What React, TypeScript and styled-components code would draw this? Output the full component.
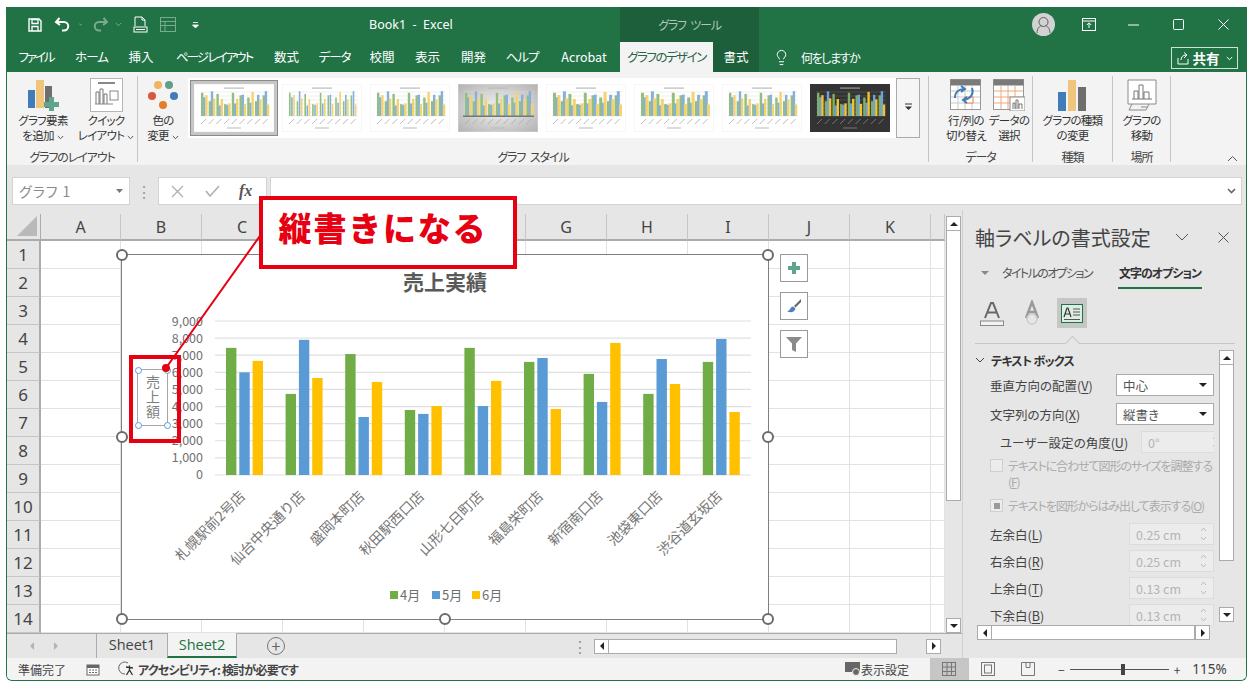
import React from "react";
import styled, { createGlobalStyle } from "styled-components";
import { Lightbulb } from "lucide-react";

const GREEN = "#217346";
const RED = "#e60012";
const FONT = '"Noto Sans CJK JP", "Noto Sans", sans-serif';

const GlobalStyle = createGlobalStyle`
  html, body { margin: 0; padding: 0; background: #fff; }
  body { font-family: ${FONT}; font-feature-settings: "palt"; color: #444; overflow: hidden; }
  * { box-sizing: border-box; }
`;

const Window = styled.div`
  position: relative;
  width: 1241px;
  height: 674px;
  margin: 7px 0 0 6px;
  border: solid ${GREEN};
  border-width: 0 1px 1px 1px;
  border-radius: 0 0 6px 6px;
  overflow: hidden;
  display: flex;
  flex-direction: column;
  background: #e6e6e6;
`;

/* title bar */
const TitleBar = styled.div`
  height: 35px;
  background: ${GREEN};
  color: #fff;
  display: flex;
  flex: none;
`;
const Qat = styled.div`
  width: 362px;
  padding-left: 13px;
  display: flex;
  align-items: center;
`;
const QatSlot = styled.div<{ $w: number; $ml?: number; $dim?: boolean }>`
  width: ${(p) => p.$w}px;
  margin-left: ${(p) => p.$ml || 0}px;
  opacity: ${(p) => (p.$dim ? 0.4 : 1)};
  display: flex;
  justify-content: center;
  align-items: center;
`;
const BookTitle = styled.div`
  width: 251px;
  font-size: 12.5px;
  line-height: 35px;
  font-family: "Noto Sans", sans-serif;
  white-space: pre;
`;
const ContextTab = styled.div`
  width: 139px;
  height: 35px;
  background: #1c5f3a;
  color: #a9c9b6;
  font-size: 12px;
  letter-spacing: -1.2px;
  word-spacing: 3px;
  line-height: 35px;
  text-align: center;
`;
const WindowButtons = styled.div`
  margin-left: auto;
  display: flex;
`;
const WindowButton = styled.div`
  width: 45px;
  height: 35px;
  display: flex;
  align-items: center;
  justify-content: center;
`;
const Avatar = styled.div`
  width: 23px;
  height: 23px;
  border-radius: 50%;
  background: #d2d2d2;
  display: flex;
  align-items: center;
  justify-content: center;
`;

/* ribbon tabs */
const TabRow = styled.div`
  height: 30px;
  background: ${GREEN};
  display: flex;
  align-items: stretch;
  flex: none;
`;
const Tab = styled.div<{ $w: number; $ls?: number; $active?: boolean; $dark?: boolean }>`
  width: ${(p) => p.$w}px;
  text-align: center;
  font-size: 12.5px;
  letter-spacing: ${(p) => p.$ls || 0}px;
  line-height: 30px;
  white-space: nowrap;
  background: ${(p) => (p.$active ? "#f3f3f3" : p.$dark ? "#1c5f3a" : "transparent")};
  color: ${(p) => (p.$active ? "#2b6346" : "#fff")};
`;
const TellMe = styled.div`
  margin-left: 14px;
  display: flex;
  align-items: center;
  gap: 11px;
  color: #fff;
  font-size: 12px;
  letter-spacing: -1.4px;
`;
const ShareButton = styled.div`
  margin: 5px 8px 3px auto;
  width: 67px;
  border: 1px solid #cfe0d6;
  color: #fff;
  font-size: 13.5px;
  font-weight: 700;
  display: flex;
  align-items: center;
  justify-content: center;
  gap: 3px;
`;

/* ribbon */
const Ribbon = styled.div`
  height: 93px;
  flex: none;
  background: #f3f3f3;
  display: flex;
  padding-top: 4px;
`;
const Group = styled.div<{ $w: number }>`
  width: ${(p) => p.$w}px;
  height: 86px;
  border-right: 1px solid #c6c6c6;
  display: flex;
  flex-direction: column;
  flex: none;
`;
const GroupBody = styled.div<{ $pl?: number }>`
  flex: 1;
  min-height: 0;
  display: flex;
  padding-left: ${(p) => p.$pl || 0}px;
`;
const GroupLabel = styled.div`
  height: 16px;
  margin-bottom: -4px;
  font-size: 12px;
  letter-spacing: -1.1px;
  word-spacing: 3px;
  line-height: 14px;
  text-align: center;
  color: #444;
`;
const BigButton = styled.div<{ $w: number }>`
  width: ${(p) => p.$w}px;
  flex: none;
  display: flex;
  flex-direction: column;
  align-items: center;
  font-size: 11.5px;
  letter-spacing: -0.7px;
  line-height: 15px;
  color: #333;
  white-space: nowrap;
  text-align: center;
`;
const BigIcon = styled.div`
  height: 37px;
  display: flex;
  align-items: center;
  justify-content: center;
  flex: none;
`;
const Gallery = styled.div`
  margin-top: 2px;
  width: 708px;
  height: 60px;
  background: #fff;
  padding-left: 2px;
  display: flex;
  align-items: center;
  gap: 8px;
  flex: none;
`;
const Thumb = styled.div<{ $selected?: boolean }>`
  width: ${(p) => (p.$selected ? 88 : 80)}px;
  height: ${(p) => (p.$selected ? 56 : 48)}px;
  margin-right: ${(p) => (p.$selected ? -4 : 0)}px;
  padding: ${(p) => (p.$selected ? "3px" : 0)};
  background: #c6c6c6;
  border: ${(p) => (p.$selected ? "1px solid #8a8a8a" : "0")};
  flex: none;
  svg { display: block; }
`;
const GalleryMore = styled.div`
  margin-top: 2px;
  width: 24px;
  height: 60px;
  border: 1px solid #ababab;
  background: #f5f5f5;
  display: flex;
  justify-content: center;
  padding-top: 24px;
  flex: none;
`;
const Collapse = styled.div`
  align-self: flex-end;
  margin: 0 8px 3px auto;
  display: flex;
`;

/* formula bar */
const FormulaBar = styled.div`
  height: 45px;
  flex: none;
  background: #e6e6e6;
  display: flex;
  padding: 12px 4px 0 5px;
  align-items: flex-start;
`;
const NameBox = styled.div`
  width: 118px;
  height: 28px;
  background: #fff;
  border: 1px solid #d4d4d4;
  font-size: 14px;
  line-height: 26px;
  letter-spacing: 1px;
  color: #8a8a8a;
  padding: 0 6px;
  display: flex;
  justify-content: space-between;
  align-items: center;
`;
const Grip = styled.div`
  width: 28px;
  height: 28px;
  color: #999;
  display: flex;
  align-items: center;
  justify-content: center;
`;
const FxBox = styled.div`
  width: 109px;
  height: 28px;
  background: #fff;
  border: 1px solid #d4d4d4;
  display: flex;
  align-items: center;
  gap: 21px;
  padding-left: 12px;
  color: #aaa;
`;
const FxText = styled.span`
  font-family: "Liberation Serif", serif;
  font-style: italic;
  font-size: 16px;
  color: #555;
  font-weight: 700;
  margin-left: -2px;
`;
const FormulaInput = styled.div`
  flex: 1;
  height: 28px;
  margin-left: 3px;
  background: #fff;
  border: 1px solid #d4d4d4;
  display: flex;
  align-items: center;
  justify-content: flex-end;
  padding-right: 5px;
`;

/* body */
const Body = styled.div`
  flex: 1;
  min-height: 0;
  display: flex;
`;
const SheetColumn = styled.div`
  width: 955px;
  flex: none;
  display: flex;
  flex-direction: column;
  padding-top: 4px;
`;
const SheetArea = styled.div`
  height: 419px;
  flex: none;
  display: flex;
`;
const GridWrap = styled.div`
  position: relative;
  width: 938px;
  flex: none;
  overflow: hidden;
  background: #fff;
`;
const SheetGrid = styled.div`
  display: grid;
  grid-template-columns: 34px 80px repeat(10, 81px) 14px;
  grid-template-rows: 27px repeat(14, 28px);
`;
const Corner = styled.div`
  background: #e6e6e6;
  border-bottom: 2px solid #ababab;
  border-right: 1px solid #ababab;
  position: relative;
  &::after {
    content: "";
    position: absolute;
    right: 3px;
    bottom: 3px;
    width: 20px;
    height: 20px;
    background: #b9b9b9;
    clip-path: polygon(100% 0, 100% 100%, 0 100%);
  }
`;
const ColHead = styled.div`
  background: #e6e6e6;
  border-bottom: 2px solid #ababab;
  border-right: 1px solid #c6c6c6;
  font-family: "Noto Sans", sans-serif;
  font-size: 16px;
  line-height: 26px;
  text-align: center;
  color: #444;
`;
const RowHead = styled.div`
  background: #e6e6e6;
  border-bottom: 1px solid #c6c6c6;
  border-right: 2px solid #ababab;
  font-family: "Noto Sans", sans-serif;
  font-size: 17px;
  line-height: 27px;
  text-align: center;
  color: #444;
`;
const Cell = styled.div`
  border-right: 1px solid #e2e2e2;
  border-bottom: 1px solid #e2e2e2;
`;

/* chart */
const Chart = styled.div`
  position: absolute;
  left: 115px;
  top: 41px;
  width: 646px;
  height: 364px;
  background: #fff;
  outline: 1.5px solid #7f7f7f;
`;
const ChartSvg = styled.svg`
  display: block;
  text {
    font-family: ${FONT};
    font-feature-settings: normal;
  }
`;
const Handle = styled.div<{ $x: number; $y: number }>`
  position: absolute;
  left: ${(p) => p.$x}%;
  top: ${(p) => p.$y}%;
  width: 12px;
  height: 12px;
  margin: -6px 0 0 -6px;
  border-radius: 50%;
  background: #fff;
  border: 2px solid #6b6b6b;
`;
const AxisTitle = styled.div`
  position: absolute;
  left: 15px;
  top: 114px;
  width: 31px;
  height: 57px;
  border: 1px solid #a6a6a6;
  writing-mode: vertical-rl;
  font-size: 14px;
  line-height: 29px;
  text-align: center;
  letter-spacing: 1px;
  color: #7f7f7f;
  font-feature-settings: normal;
`;
const BlueDot = styled.div<{ $x: number; $y: number }>`
  position: absolute;
  left: ${(p) => p.$x}%;
  top: ${(p) => p.$y}%;
  width: 7px;
  height: 7px;
  margin: -3.5px 0 0 -3.5px;
  border-radius: 50%;
  background: #fff;
  border: 1.5px solid #5b9bd5;
`;
const ChartTools = styled.div`
  position: absolute;
  left: 773px;
  top: 40px;
  display: flex;
  flex-direction: column;
  gap: 10px;
`;
const ChartTool = styled.div`
  width: 28px;
  height: 28px;
  background: #fff;
  border: 1px solid #9a9a9a;
  display: flex;
  align-items: center;
  justify-content: center;
`;

/* scroll bars */
const VScroll = styled.div`
  width: 15px;
  flex: none;
  margin-left: 1px;
  display: flex;
  flex-direction: column;
  background: #e6e6e6;
  padding-top: 2px;
`;
const ScrollBtn = styled.div`
  width: 15px;
  height: 15px;
  flex: none;
  background: #fff;
  border: 1px solid #ababab;
  display: flex;
  align-items: center;
  justify-content: center;
`;
const Tri = styled.span<{ $dir: "up" | "down" | "left" | "right"; $color?: string }>`
  width: 0;
  height: 0;
  border-style: solid;
  border-color: transparent;
  ${(p) => {
    const c = p.$color || "#222";
    if (p.$dir === "up") return `border-width: 0 4px 4px; border-bottom-color: ${c};`;
    if (p.$dir === "down") return `border-width: 4px 4px 0; border-top-color: ${c};`;
    if (p.$dir === "left") return `border-width: 4px 4px 4px 0; border-right-color: ${c};`;
    return `border-width: 4px 0 4px 4px; border-left-color: ${c};`;
  }}
`;
const VThumb = styled.div<{ $h: number }>`
  height: ${(p) => p.$h}px;
  flex: none;
  background: #fff;
  border: 1px solid #ababab;
  border-top: 0;
`;
const Fill = styled.div`
  flex: 1;
`;

/* sheet tabs */
const SheetBar = styled.div`
  height: 25px;
  flex: none;
  background: #e6e6e6;
  border-top: 1px solid #ababab;
  display: flex;
  align-items: center;
`;
const SheetNav = styled.div`
  width: 89px;
  height: 100%;
  padding-left: 23px;
  display: flex;
  align-items: center;
  gap: 20px;
  opacity: 0.25;
`;
const SheetTab = styled.div<{ $active?: boolean }>`
  height: 25px;
  margin-top: -1px;
  width: ${(p) => (p.$active ? 70 : 71)}px;
  border-left: 1px solid #ababab;
  ${(p) => p.$active && `border-right: 1px solid #ababab; background: #f3f3f3; border-bottom: 2px solid ${GREEN}; color: ${GREEN};`}
  font-family: "Open Sans", sans-serif;
  font-size: 14.5px;
  line-height: 23px;
  text-align: center;
`;
const AddSheet = styled.div`
  margin-left: 30px;
  width: 18px;
  height: 18px;
  border-radius: 50%;
  border: 1px solid #777;
  color: #666;
  font-size: 16px;
  line-height: 15px;
  text-align: center;
`;
const SplitGrip = styled.div`
  margin-left: 288px;
  width: 14px;
  color: #999;
  display: flex;
  justify-content: center;
`;
const HScroll = styled.div`
  margin-left: 7px;
  display: flex;
  align-items: center;
`;
const HThumb = styled.div<{ $w: number }>`
  width: ${(p) => p.$w}px;
  height: 15px;
  background: #fff;
  border: 1px solid #ababab;
  border-left: 0;
`;
const HGap = styled.div<{ $w: number }>`
  width: ${(p) => p.$w}px;
`;

/* task pane */
const Pane = styled.div`
  flex: 1;
  min-width: 0;
  position: relative;
  border-left: 1px solid #d0d0d0;
  background: #e6e6e6;
  padding-left: 12px;
  display: flex;
  flex-direction: column;
`;
const PaneHead = styled.div`
  margin-top: 13px;
  height: 28px;
  display: flex;
  align-items: center;
  font-size: 20px;
  color: #444;
  white-space: nowrap;
`;
const PaneHeadBtns = styled.div`
  margin-left: 24px;
  display: flex;
  gap: 29px;
  align-items: center;
`;
const PaneTabs = styled.div`
  margin-top: 10px;
  height: 28px;
  display: flex;
  align-items: flex-start;
  font-size: 12px;
  line-height: 24px;
`;
const PaneTabMuted = styled.div`
  margin-left: 6px;
  display: flex;
  align-items: center;
  gap: 13px;
  width: 137px;
  color: #555;
  letter-spacing: -1.6px;
  white-space: nowrap;
`;
const PaneTabActive = styled.div`
  width: 84px;
  height: 28px;
  border-bottom: 2px solid ${GREEN};
  font-weight: 700;
  letter-spacing: -1px;
  color: #333;
  text-align: center;
  white-space: nowrap;
`;
const PaneIcons = styled.div`
  margin-top: 9px;
  height: 30px;
  display: flex;
  align-items: center;
  padding-left: 2px;
  gap: 10px;
`;
const PaneIcon = styled.div<{ $on?: boolean }>`
  width: 30px;
  height: 30px;
  background: ${(p) => (p.$on ? "#c6c6c6" : "transparent")};
  display: flex;
  align-items: center;
  justify-content: center;
`;
const PaneDivider = styled.div`
  position: relative;
  margin-top: 15px;
  width: 260px;
  border-top: 1px solid #c6c6c6;
  flex: none;
  &::after {
    content: "";
    position: absolute;
    left: 92px;
    top: -6px;
    width: 10px;
    height: 10px;
    transform: rotate(45deg);
    background: #e6e6e6;
    border: solid #c6c6c6;
    border-width: 1px 0 0 1px;
  }
`;
const PaneBody = styled.div`
  display: flex;
  height: 276px;
  margin-top: 5px;
  flex: none;
`;
const PaneForm = styled.div`
  width: 239px;
  flex: none;
  overflow: hidden;
  padding-top: 2px;
`;
const SectionHead = styled.div`
  display: flex;
  align-items: center;
  gap: 6px;
  height: 18px;
  font-size: 12px;
  font-weight: 700;
  letter-spacing: -0.7px;
  color: #333;
`;
const FormRow = styled.div<{ $mt?: number; $indent?: number }>`
  display: flex;
  align-items: center;
  height: 22px;
  margin-top: ${(p) => (p.$mt === undefined ? 5 : p.$mt)}px;
  padding-left: ${(p) => p.$indent || 15}px;
  font-size: 12.5px;
  color: #444;
  white-space: nowrap;
  u { text-underline-offset: 2px; }
`;
const Field = styled.div<{ $off?: boolean }>`
  position: absolute;
  right: 0;
  ${(p) => (p.$off ? "width: 85px;" : "width: 98px;")}
  height: 22px;
  background: ${(p) => (p.$off ? "#ececec" : "#fff")};
  border: 1px solid ${(p) => (p.$off ? "#dcdcdc" : "#ababab")};
  color: ${(p) => (p.$off ? "#b4b4b4" : "#555")};
  font-size: 12.5px;
  padding: 0 6px;
  display: flex;
  align-items: center;
  justify-content: space-between;
`;
const FieldSlot = styled.div`
  position: relative;
  margin-left: auto;
  width: 98px;
  height: 22px;
  flex: none;
`;
const CheckRow = styled.div<{ $mt: number }>`
  display: flex;
  margin-top: ${(p) => p.$mt}px;
  padding-left: 15px;
  gap: 5px;
  font-size: 12px;
  letter-spacing: -1.05px;
  line-height: 16px;
  color: #ababab;
  white-space: nowrap;
`;
const CheckBox = styled.div<{ $on?: boolean }>`
  width: 13px;
  height: 13px;
  margin-top: 1px;
  flex: none;
  background: #ececec;
  border: 1px solid #cfcfcf;
  display: flex;
  align-items: center;
  justify-content: center;
  &::after {
    content: "";
    display: ${(p) => (p.$on ? "block" : "none")};
    width: 6px;
    height: 6px;
    background: #9a9a9a;
  }
`;
const PaneV = styled.div`
  width: 15px;
  margin-left: 5px;
  display: flex;
  flex-direction: column;
  margin-top: 1px;
  height: 272px;
`;
const PaneH = styled.div`
  margin-left: 2px;
  display: flex;
  align-items: center;
  height: 15px;
`;

/* status bar */
const StatusBar = styled.div`
  height: 22px;
  flex: none;
  background: #f3f3f3;
  display: flex;
  align-items: center;
  font-size: 12px;
  color: #444;
  padding-left: 11px;
`;
const StatusItem = styled.div<{ $ml?: number; $bold?: boolean }>`
  margin-left: ${(p) => p.$ml || 0}px;
  font-weight: ${(p) => (p.$bold ? 700 : 400)};
  letter-spacing: ${(p) => (p.$bold ? -0.8 : 0)}px;
  display: flex;
  align-items: center;
  white-space: nowrap;
`;
const ViewButton = styled.div<{ $on?: boolean; $ml?: number }>`
  width: ${(p) => (p.$on ? 39 : 31)}px;
  height: 22px;
  margin-left: ${(p) => p.$ml || 0}px;
  background: ${(p) => (p.$on ? "#c6c6c6" : "transparent")};
  display: flex;
  align-items: center;
  justify-content: center;
`;
const ZoomTrack = styled.div`
  position: relative;
  margin: 0 5px;
  width: 99px;
  height: 1px;
  background: #555;
`;
const ZoomThumb = styled.div`
  position: absolute;
  left: 51px;
  top: -5px;
  width: 4px;
  height: 11px;
  background: #444;
`;
const ZoomPercent = styled.div`
  margin-left: 12px;
  font-family: "Noto Sans", sans-serif;
  font-size: 13.5px;
`;

/* overlays */
const Callout = styled.div`
  position: absolute;
  left: 252px;
  top: 189px;
  width: 258px;
  height: 73px;
  padding-right: 10px;
  background: #fff;
  border: 4px solid ${RED};
  color: ${RED};
  font-size: 33px;
  font-weight: 800;
  letter-spacing: 1.8px;
  text-align: center;
  line-height: 55px;
  font-feature-settings: normal;
`;
const RedBox = styled.div`
  position: absolute;
  left: 122px;
  top: 348px;
  width: 52px;
  height: 88px;
  border: 4px solid ${RED};
`;
const Leader = styled.svg`
  position: absolute;
  left: 0;
  top: 0;
  pointer-events: none;
`;

const COLS = ["A", "B", "C", "D", "E", "F", "G", "H", "I", "J", "K", ""];
const ROWS = Array.from({ length: 14 }, (_, i) => i + 1);

const GREEN_BAR = "#70ad47";
const BLUE_BAR = "#5b9bd5";
const YELLOW_BAR = "#ffc000";

const DATA = [
  [7430, 6000, 6670],
  [4740, 7900, 5670],
  [7070, 3390, 5440],
  [3800, 3570, 4030],
  [7430, 4030, 5500],
  [6610, 6840, 3860],
  [5910, 4270, 7720],
  [4740, 6780, 5320],
  [6610, 7950, 3680],
];
const STORES = [
  "札幌駅前2号店",
  "仙台中央通り店",
  "盛岡本町店",
  "秋田駅西口店",
  "山形七日町店",
  "福島栄町店",
  "新宿南口店",
  "池袋東口店",
  "渋谷道玄坂店",
];
const TABS: [string, number, number][] = [
  ["ファイル", 58, -2],
  ["ホーム", 53, -1],
  ["挿入", 46, 0],
  ["ページ レイアウト", 100, -2],
  ["数式", 45, 0],
  ["データ", 51, -1],
  ["校閲", 44, 0],
  ["表示", 47, 0],
  ["開発", 45, 0],
  ["ヘルプ", 52, -1],
  ["Acrobat", 72, 0],
];
const MARGINS: [string, string, string, number][] = [
  ["左余白", "L", "0.25 cm", 9],
  ["右余白", "R", "0.25 cm", 5],
  ["上余白", "T", "0.13 cm", 5],
  ["下余白", "B", "0.13 cm", 5],
];
const AXIS = ["9,000", "8,000", "7,000", "6,000", "5,000", "4,000", "3,000", "2,000", "1,000", "0"];

const Caret = ({ color = "#555" }: { color?: string }) => (
  <svg width="7" height="5" viewBox="0 0 7 5" style={{ marginLeft: 3 }}>
    <path d="M.8 1l2.7 2.7L6.2 1" fill="none" stroke={color} strokeWidth="1" />
  </svg>
);

const Spin = () => (
  <svg width="7" height="16" viewBox="0 0 7 16">
    <path d="M1 5l2.5-3L6 5M1 11l2.5 3L6 11" fill="none" stroke="#bdbdbd" strokeWidth="1" />
  </svg>
);

const MiniChart = ({ variant }: { variant: number }) => {
  const dark = variant === 7;
  const grey = variant === 3;
  const thin = variant === 1;
  const wide = variant === 4 || variant === 5;
  const w = thin ? 1.6 : wide ? 3 : 2.4;
  const bg = dark ? "#333" : grey ? "url(#greyFill)" : "#fff";
  const line = dark ? "#666" : "#dedede";
  const colors = dark ? ["#7fb05f", "#6fa3d8", "#f2c230"] : ["#93bf7c", "#86b0dc", "#f5d36a"];
  return (
    <svg width="100%" height="100%" viewBox="0 0 80 48" preserveAspectRatio="none">
      <defs>
        <radialGradient id="greyFill" r="0.8">
          <stop offset="0" stopColor="#f4f4f4" />
          <stop offset="1" stopColor="#a8a8a8" />
        </radialGradient>
      </defs>
      <rect width="80" height="48" fill={bg} stroke={dark ? "none" : "#e6e6e6"} strokeWidth=".6" />
      <rect x="30" y="3.5" width="20" height="1.2" fill={dark ? "#999" : "#bbb"} />
      {[8, 12, 16, 20, 24, 28, 32].map((y) => (
        <line key={y} x1="6" x2="76" y1={y} y2={y} stroke={line} strokeWidth=".5" />
      ))}
      {variant === 6 &&
        [14, 26, 38, 50, 62].map((x) => (
          <line key={x} x1={x} x2={x} y1="8" y2="32" stroke={line} strokeWidth=".5" />
        ))}
      {DATA.map((g, i) =>
        g.map((v, j) => (
          <rect
            key={j}
            x={7 + i * 7.7 + j * (wide ? 2.2 : 2.1)}
            y={32 - v / 320}
            width={w}
            height={v / 320}
            fill={colors[j]}
          />
        ))
      )}
      {grey && <rect x="5" y="31.5" width="71" height="1.5" fill="#777" />}
      {DATA.map((_, i) => (
        <line
          key={i}
          x1={7 + i * 7.7}
          y1="40"
          x2={12 + i * 7.7}
          y2="35"
          stroke={dark ? "#888" : "#aaa"}
          strokeWidth=".8"
        />
      ))}
      <rect x="33" y="43.5" width="14" height="1" fill={dark ? "#777" : "#bbb"} />
    </svg>
  );
};

const Bars3 = () => (
  <svg width="34" height="34" viewBox="0 0 34 34">
    <rect x="2" y="14" width="8" height="19" fill="#3f7cb8" />
    <rect x="12" y="2" width="8" height="31" fill="#efc47c" />
    <rect x="22" y="9" width="8" height="24" fill="#6e6e6e" />
  </svg>
);

const TableIcon = ({ arrows }: { arrows?: boolean }) => (
  <svg width="32" height="32" viewBox="0 0 32 32">
    <rect x=".5" y=".5" width="30" height="30" fill="#fff" stroke="#999" />
    <rect x=".5" y=".5" width="30" height="6" fill="#7a7a7a" />
    {[12, 18, 24].map((y) => (
      <line key={y} x1="1" x2="30" y1={y} y2={y} stroke={arrows ? "#c9c9c9" : "#f0a878"} />
    ))}
    {[8, 15, 22].map((x) => (
      <line key={x} x1={x} x2={x} y1="7" y2="30" stroke={arrows ? "#c9c9c9" : "#f0a878"} />
    ))}
    {arrows ? (
      <>
        <rect x="15" y="18" width="8" height="6" fill="#fff" stroke="#e8804a" />
        <path d="M5 19c0-6 4-9 9-9M11 7l4 3-4 3" fill="none" stroke="#3f7cb8" strokeWidth="2" />
        <path d="M22 9c2 5-1 11-8 12M17 18l-4 3 4 3" fill="none" stroke="#3f7cb8" strokeWidth="2" />
      </>
    ) : (
      <>
        <rect x="17" y="18" width="15" height="14" fill="#fff" stroke="#8a8a8a" />
        <path d="M20 30v-6h2v6M23 30v-9h2v9M26 30v-5h3v5" fill="none" stroke="#777" />
      </>
    )}
  </svg>
);

const SheetIcon = () => (
  <svg width="14" height="14" viewBox="0 0 14 14">
    <rect x=".5" y=".5" width="13" height="13" fill="none" stroke="#777" />
    <path d="M.5 5h13M.5 9.5h13M5 .5v13M9.5 .5v13" stroke="#777" />
  </svg>
);

export default function App() {
  return (
    <>
      <GlobalStyle />
      <Window>
        <TitleBar>
          <Qat>
            <QatSlot $w={30}>
              <svg width="16" height="16" viewBox="0 0 16 16">
                <path d="M2 2h10l2 2v10H2z" fill="none" stroke="#fff" strokeWidth="1.4" />
                <path d="M5 2.5h6v4H5zM5 14V9.5h6V14" fill="none" stroke="#fff" strokeWidth="1.3" />
              </svg>
            </QatSlot>
            <QatSlot $w={26}>
              <svg width="18" height="15" viewBox="0 0 18 15">
                <path d="M5.5 1L2 5l4 3" fill="none" stroke="#fff" strokeWidth="2" />
                <path d="M2.5 5H10a4 4 0 0 1 0 8.5H8" fill="none" stroke="#fff" strokeWidth="2" />
              </svg>
            </QatSlot>
            <QatSlot $w={6}>
              <Caret color="#fff" />
            </QatSlot>
            <QatSlot $w={24} $ml={6} $dim>
              <svg width="18" height="15" viewBox="0 0 18 15">
                <path d="M12.5 1L16 5l-4 3" fill="none" stroke="#fff" strokeWidth="2" />
                <path d="M15.5 5H8a4 4 0 0 0 0 8.5h2" fill="none" stroke="#fff" strokeWidth="2" />
              </svg>
            </QatSlot>
            <QatSlot $w={10} $dim>
              <Caret color="#fff" />
            </QatSlot>
            <QatSlot $w={24} $ml={6}>
              <svg width="15" height="17" viewBox="0 0 15 17">
                <path d="M2 10V1h7l3 3v6M9 1v3h3" fill="none" stroke="#fff" />
                <rect x="1" y="11" width="13" height="5" fill="none" stroke="#fff" />
                <path d="M3 13.5h9" stroke="#fff" />
              </svg>
            </QatSlot>
            <QatSlot $w={24} $ml={4} $dim>
              <svg width="16" height="15" viewBox="0 0 16 15">
                <rect x=".5" y=".5" width="15" height="14" fill="none" stroke="#fff" />
                <path d="M.5 4.5h15M.5 8.5h15M5 4.5v10" stroke="#fff" />
              </svg>
            </QatSlot>
            <QatSlot $w={20} $ml={5}>
              <svg width="7" height="8" viewBox="0 0 7 8">
                <path d="M1 1.5h5M.5 4l3 3 3-3z" stroke="#fff" fill="#fff" strokeWidth=".8" />
              </svg>
            </QatSlot>
          </Qat>
          <BookTitle>Book1  -  Excel</BookTitle>
          <ContextTab>グラフ ツール</ContextTab>
          <WindowButtons>
            <WindowButton>
              <Avatar>
                <svg width="15" height="18" viewBox="0 0 15 18">
                  <circle cx="7.5" cy="6" r="4.5" fill="none" stroke="#5f5f5f" />
                  <path d="M1 17c0-5 3-7 4.5-7.5M14 17c0-5-3-7-4.5-7.5" fill="none" stroke="#5f5f5f" />
                </svg>
              </Avatar>
            </WindowButton>
            <WindowButton>
              <svg width="14" height="13" viewBox="0 0 14 13">
                <rect x=".5" y=".5" width="13" height="12" fill="none" stroke="#fff" />
                <path d="M.5 3h13M7 10V5M4.8 7L7 4.8 9.2 7" fill="none" stroke="#fff" />
              </svg>
            </WindowButton>
            <WindowButton>
              <svg width="11" height="2" viewBox="0 0 11 2">
                <path d="M0 1h11" stroke="#fff" />
              </svg>
            </WindowButton>
            <WindowButton>
              <svg width="11" height="11" viewBox="0 0 11 11">
                <rect x=".5" y=".5" width="10" height="10" rx="1" fill="none" stroke="#fff" />
              </svg>
            </WindowButton>
            <WindowButton>
              <svg width="11" height="11" viewBox="0 0 11 11">
                <path d="M.5.5l10 10M10.5.5l-10 10" stroke="#fff" />
              </svg>
            </WindowButton>
          </WindowButtons>
        </TitleBar>

        <TabRow>
          {TABS.map(([label, w, ls]) => (
            <Tab key={label} $w={w} $ls={ls}>
              {label}
            </Tab>
          ))}
          <Tab $w={93} $ls={-1.5} $active>
            グラフのデザイン
          </Tab>
          <Tab $w={46} $dark>
            書式
          </Tab>
          <TellMe>
            <Lightbulb size={17} strokeWidth={1.4} />
            何をしますか
          </TellMe>
          <ShareButton>
            <svg width="13" height="13" viewBox="0 0 13 13">
              <path d="M1 6v6h10V7M4 8c0-3 2-5 5-5M7 .5L10 3 7 6" fill="none" stroke="#fff" />
            </svg>
            共有
            <Caret color="#fff" />
          </ShareButton>
        </TabRow>

        <Ribbon>
          <Group $w={131}>
            <GroupBody $pl={4}>
              <BigButton $w={64}>
                <BigIcon>
                  <svg width="32" height="32" viewBox="0 0 32 32">
                    <rect x="1" y="11" width="7" height="18" fill="#3f7cb8" />
                    <rect x="9" y="1" width="8" height="28" fill="#efc47c" />
                    <rect x="18" y="7" width="7" height="22" fill="#6e6e6e" />
                    <path d="M22 18h5v5h5v5h-5v4h-5v-4h-5v-5h5z" fill="#5ea58c" />
                  </svg>
                </BigIcon>
                <span>グラフ要素</span>
                <span>
                  を追加
                  <Caret />
                </span>
              </BigButton>
              <BigButton $w={62}>
                <BigIcon>
                  <svg width="33" height="34" viewBox="0 0 33 34">
                    <rect x=".5" y=".5" width="32" height="33" fill="#fff" stroke="#b5b5b5" />
                    <rect x="8" y="4" width="17" height="2" fill="#888" />
                    <path d="M6 26V14h3v12M10 26V11h3v15M14 26V16h3v10" fill="none" stroke="#777" />
                    <rect x="20" y="13" width="8" height="9" fill="none" stroke="#888" />
                    <path d="M5 26h18" stroke="#888" />
                  </svg>
                </BigIcon>
                <span>クイック</span>
                <span>
                  レイアウト
                  <Caret />
                </span>
              </BigButton>
            </GroupBody>
            <GroupLabel>グラフのレイアウト</GroupLabel>
          </Group>
          <Group $w={791}>
            <GroupBody>
              <BigButton $w={50}>
                <BigIcon>
                  <svg width="32" height="30" viewBox="0 0 32 30">
                    <circle cx="11" cy="5" r="4" fill="#efb45e" />
                    <circle cx="22" cy="5" r="4" fill="#5f9f8a" />
                    <circle cx="5" cy="16" r="4" fill="#d9573a" />
                    <circle cx="27" cy="16" r="4" fill="#3f7cb8" />
                    <circle cx="16" cy="25" r="4" fill="#e67b2a" />
                  </svg>
                </BigIcon>
                <span>色の</span>
                <span>
                  変更
                  <Caret />
                </span>
              </BigButton>
              <Gallery>
                {[0, 1, 2, 3, 4, 5, 6, 7].map((v) => (
                  <Thumb key={v} $selected={v === 0}>
                    <MiniChart variant={v} />
                  </Thumb>
                ))}
              </Gallery>
              <GalleryMore>
                <svg width="9" height="8" viewBox="0 0 9 8">
                  <path d="M1 1h7" stroke="#333" />
                  <path d="M1 3.5h7L4.5 7z" fill="#333" />
                </svg>
              </GalleryMore>
            </GroupBody>
            <GroupLabel>グラフ スタイル</GroupLabel>
          </Group>
          <Group $w={104}>
            <GroupBody $pl={14}>
              <BigButton $w={46}>
                <BigIcon>
                  <TableIcon arrows />
                </BigIcon>
                <span>行/列の</span>
                <span>切り替え</span>
              </BigButton>
              <BigButton $w={40}>
                <BigIcon>
                  <TableIcon />
                </BigIcon>
                <span>データの</span>
                <span>選択</span>
              </BigButton>
            </GroupBody>
            <GroupLabel>データ</GroupLabel>
          </Group>
          <Group $w={80}>
            <GroupBody>
              <BigButton $w={79}>
                <BigIcon>
                  <Bars3 />
                </BigIcon>
                <span>グラフの種類</span>
                <span>の変更</span>
              </BigButton>
            </GroupBody>
            <GroupLabel>種類</GroupLabel>
          </Group>
          <Group $w={58}>
            <GroupBody>
              <BigButton $w={57}>
                <BigIcon>
                  <svg width="30" height="32" viewBox="0 0 30 32">
                    <path d="M1 1h28v24H1z" fill="#fff" stroke="#8a8a8a" />
                    <path d="M7 20V12h4v8M12 20V6h4v14M17 20v-7h5v7M5 20h20" fill="none" stroke="#777" />
                    <path d="M5 25l-3 6h17l3-6M14 28h6" fill="none" stroke="#8a8a8a" />
                  </svg>
                </BigIcon>
                <span>グラフの</span>
                <span>移動</span>
              </BigButton>
            </GroupBody>
            <GroupLabel>場所</GroupLabel>
          </Group>
          <Collapse>
            <svg width="11" height="7" viewBox="0 0 11 7">
              <path d="M1 6l4.5-4.5L10 6" fill="none" stroke="#555" />
            </svg>
          </Collapse>
        </Ribbon>

        <FormulaBar>
          <NameBox>
            グラフ 1
            <svg width="7" height="4" viewBox="0 0 7 4">
              <path d="M0 0h7L3.5 4z" fill="#777" />
            </svg>
          </NameBox>
          <Grip>⋮</Grip>
          <FxBox>
            <svg width="13" height="13" viewBox="0 0 13 13">
              <path d="M1 1l11 11M12 1L1 12" stroke="#b0b0b0" strokeWidth="1.3" />
            </svg>
            <svg width="15" height="12" viewBox="0 0 15 12">
              <path d="M1 6l4 5L14 1" fill="none" stroke="#b0b0b0" strokeWidth="1.6" />
            </svg>
            <FxText>fx</FxText>
          </FxBox>
          <FormulaInput>
            <svg width="9" height="6" viewBox="0 0 9 6">
              <path d="M1 1l3.5 3.5L8 1" fill="none" stroke="#666" strokeWidth="1.6" />
            </svg>
          </FormulaInput>
        </FormulaBar>

        <Body>
          <SheetColumn>
            <SheetArea>
              <GridWrap>
                <SheetGrid>
                  <Corner />
                  {COLS.map((c, i) => (
                    <ColHead key={i}>{c}</ColHead>
                  ))}
                  {ROWS.map((r) => (
                    <React.Fragment key={r}>
                      <RowHead>{r}</RowHead>
                      {COLS.map((_, i) => (
                        <Cell key={i} />
                      ))}
                    </React.Fragment>
                  ))}
                </SheetGrid>
                <Chart>
                  <ChartSvg width="646" height="364" viewBox="122 255 646 364">
                    <text x="445" y="290" textAnchor="middle" fontSize="21" fontWeight="700" fill="#595959">
                      売上実績
                    </text>
                    {AXIS.map((t, i) => {
                      const y = 321 + i * 17.11;
                      return (
                        <g key={t}>
                          <line x1="215" x2="751" y1={y} y2={y} stroke="#e0e0e0" strokeWidth="1.2" />
                          <text x="203" y={y + 4.5} textAnchor="end" fontSize="12.5" fill="#6f6f6f">
                            {t}
                          </text>
                        </g>
                      );
                    })}
                    {DATA.map((g, i) =>
                      g.map((v, j) => {
                        const h = (v / 1000) * 17.11;
                        return (
                          <rect
                            key={j}
                            x={226 + i * 59.6 + j * 13.3}
                            y={475 - h}
                            width="10.4"
                            height={h}
                            fill={[GREEN_BAR, BLUE_BAR, YELLOW_BAR][j]}
                          />
                        );
                      })
                    )}
                    {STORES.map((s, i) => {
                      const x = 246 + i * 59.6;
                      return (
                        <text
                          key={s}
                          transform={`translate(${x} 497) rotate(-45)`}
                          textAnchor="end"
                          fontSize="14"
                          fill="#767676"
                        >
                          {s}
                        </text>
                      );
                    })}
                    <rect x="390" y="591" width="8" height="8" fill={GREEN_BAR} />
                    <text x="400" y="600" fontSize="13" fill="#6f6f6f">4月</text>
                    <rect x="432" y="591" width="8" height="8" fill={BLUE_BAR} />
                    <text x="442" y="600" fontSize="13" fill="#6f6f6f">5月</text>
                    <rect x="472" y="591" width="8" height="8" fill={YELLOW_BAR} />
                    <text x="482" y="600" fontSize="13" fill="#6f6f6f">6月</text>
                  </ChartSvg>
                  <AxisTitle>
                    売上額
                    <BlueDot $x={0} $y={0} />
                    <BlueDot $x={100} $y={0} />
                    <BlueDot $x={0} $y={100} />
                    <BlueDot $x={100} $y={100} />
                  </AxisTitle>
                  {[0, 50, 100].map((x) =>
                    [0, 50, 100].map((y) =>
                      x === 50 && y === 50 ? null : <Handle key={`${x}-${y}`} $x={x} $y={y} />
                    )
                  )}
                </Chart>
                <ChartTools>
                  <ChartTool>
                    <svg width="14" height="14" viewBox="0 0 14 14">
                      <path d="M5 1h4v4h4v4H9v4H5V9H1V5h4z" fill="#5ea58c" />
                    </svg>
                  </ChartTool>
                  <ChartTool>
                    <svg width="16" height="16" viewBox="0 0 16 16">
                      <path d="M15 1L8 8l1.5 1.5L15 4z" fill="#666" />
                      <path d="M7 8.5c-3 0-2 4-6 5 4 1.5 8 .5 8.5-3z" fill="#4c7fbc" />
                    </svg>
                  </ChartTool>
                  <ChartTool>
                    <svg width="16" height="15" viewBox="0 0 16 15">
                      <path d="M0 0h16l-6 6.5V15l-4-2V6.5z" fill="#8a8a8a" />
                    </svg>
                  </ChartTool>
                </ChartTools>
              </GridWrap>
              <VScroll>
                <ScrollBtn>
                  <Tri $dir="up" />
                </ScrollBtn>
                <VThumb $h={270} />
                <Fill />
                <ScrollBtn>
                  <Tri $dir="down" />
                </ScrollBtn>
              </VScroll>
            </SheetArea>
            <SheetBar>
              <SheetNav>
                <Tri $dir="left" />
                <Tri $dir="right" />
              </SheetNav>
              <SheetTab>Sheet1</SheetTab>
              <SheetTab $active>Sheet2</SheetTab>
              <AddSheet>+</AddSheet>
              <SplitGrip>⋮</SplitGrip>
              <HScroll>
                <ScrollBtn>
                  <Tri $dir="left" />
                </ScrollBtn>
                <HThumb $w={288} />
                <HGap $w={29} />
                <ScrollBtn>
                  <Tri $dir="right" />
                </ScrollBtn>
              </HScroll>
            </SheetBar>
          </SheetColumn>

          <Pane>
            <PaneHead>
              軸ラベルの書式設定
              <PaneHeadBtns>
                <svg width="14" height="8" viewBox="0 0 14 8">
                  <path d="M1 1l6 6 6-6" fill="none" stroke="#555" />
                </svg>
                <svg width="11" height="11" viewBox="0 0 11 11">
                  <path d="M.5.5l10 10M10.5.5l-10 10" stroke="#555" />
                </svg>
              </PaneHeadBtns>
            </PaneHead>
            <PaneTabs>
              <PaneTabMuted>
                <Tri $dir="down" $color="#888" />
                タイトルのオプション
              </PaneTabMuted>
              <PaneTabActive>文字のオプション</PaneTabActive>
            </PaneTabs>
            <PaneIcons>
              <PaneIcon>
                <svg width="24" height="26" viewBox="0 0 24 26">
                  <path d="M5 18L11 3h2l6 15M7.5 12.5h9" fill="none" stroke="#666" strokeWidth="2" />
                  <rect x=".5" y="21" width="23" height="4.5" fill="#f3f3f3" stroke="#888" />
                </svg>
              </PaneIcon>
              <PaneIcon>
                <svg width="20" height="26" viewBox="0 0 20 26">
                  <path d="M4 18L10 2l6 16M6 12h8" fill="none" stroke="#999" strokeWidth="2.4" />
                  <circle cx="10" cy="19" r="5" fill="none" stroke="#ccc" strokeWidth="1.5" />
                </svg>
              </PaneIcon>
              <PaneIcon $on>
                <svg width="22" height="19" viewBox="0 0 22 19">
                  <rect x=".5" y=".5" width="21" height="18" fill="#dceee3" stroke={GREEN} />
                  <path d="M3 13l3-9h1l3 9M4 10h5" fill="none" stroke="#333" strokeWidth="1.2" />
                  <path d="M12 5h7M12 8h7M12 11h7M3 15.5h16" stroke="#555" />
                </svg>
              </PaneIcon>
            </PaneIcons>
            <PaneDivider />
            <PaneBody>
              <PaneForm>
                <SectionHead>
                  <svg width="10" height="6" viewBox="0 0 10 6">
                    <path d="M1 1l4 4 4-4" fill="none" stroke="#444" />
                  </svg>
                  テキスト ボックス
                </SectionHead>
                <FormRow $mt={5}>
                  垂直方向の配置(<u>V</u>)
                  <FieldSlot>
                    <Field>
                      中心
                      <Tri $dir="down" />
                    </Field>
                  </FieldSlot>
                </FormRow>
                <FormRow $mt={7}>
                  文字列の方向(<u>X</u>)
                  <FieldSlot>
                    <Field>
                      縦書き
                      <Tri $dir="down" />
                    </Field>
                  </FieldSlot>
                </FormRow>
                <FormRow $mt={6} $indent={25}>
                  ユーザー設定の角度(<u>U</u>)
                  <FieldSlot>
                    <Field $off>
                      0°
                      <Spin />
                    </Field>
                  </FieldSlot>
                </FormRow>
                <CheckRow $mt={5}>
                  <CheckBox />
                  <span>
                    テキストに合わせて図形のサイズを調整する
                    <br />
                    (<u>F</u>)
                  </span>
                </CheckRow>
                <CheckRow $mt={8}>
                  <CheckBox $on />
                  <span>
                    テキストを図形からはみ出して表示する(<u>O</u>)
                  </span>
                </CheckRow>
                {MARGINS.map(([label, key, val, mt]) => (
                  <FormRow key={key} $mt={mt}>
                    {label}(<u>{key}</u>)
                    <FieldSlot>
                      <Field $off>
                        {val}
                        <Spin />
                      </Field>
                    </FieldSlot>
                  </FormRow>
                ))}
              </PaneForm>
              <PaneV>
                <ScrollBtn>
                  <Tri $dir="up" />
                </ScrollBtn>
                <VThumb $h={196} />
                <Fill />
                <ScrollBtn>
                  <Tri $dir="down" />
                </ScrollBtn>
              </PaneV>
            </PaneBody>
            <PaneH>
              <ScrollBtn>
                <Tri $dir="left" />
              </ScrollBtn>
              <HThumb $w={203} />
              <ScrollBtn>
                <Tri $dir="right" />
              </ScrollBtn>
            </PaneH>
          </Pane>
        </Body>

        <StatusBar>
          <StatusItem>準備完了</StatusItem>
          <StatusItem $ml={20}>
            <svg width="14" height="13" viewBox="0 0 14 13">
              <rect x="1" y="2" width="12" height="10" fill="#fff" stroke="#666" />
              <path d="M1 2h12v3H1z" fill="#666" />
              <path d="M3 7h2M6 7h2M9 7h2M3 9.5h2M6 9.5h2M9 9.5h2" stroke="#666" />
            </svg>
          </StatusItem>
          <StatusItem $ml={18} $bold>
            <svg width="18" height="16" viewBox="0 0 18 16" style={{ marginRight: 2 }}>
              <path d="M8 2a6 6 0 1 0-3 11" fill="none" stroke="#666" transform="translate(2 0)" />
              <path d="M8 6l7 1M11.5 4.5V9M8.5 14l3-5 3 5" fill="none" stroke="#333" strokeWidth="1.3" />
            </svg>
            アクセシビリティ: 検討が必要です
          </StatusItem>
          <StatusItem $ml={547}>
            <svg width="16" height="14" viewBox="0 0 16 14">
              <rect width="15" height="10" fill="#666" />
              <circle cx="11" cy="10" r="3.5" fill="#666" stroke="#f3f3f3" />
            </svg>
            表示設定
          </StatusItem>
          <ViewButton $on $ml={21}>
            <SheetIcon />
          </ViewButton>
          <ViewButton $ml={4}>
            <svg width="14" height="14" viewBox="0 0 14 14">
              <rect x=".5" y=".5" width="13" height="13" fill="none" stroke="#777" />
              <rect x="3.5" y="3" width="7" height="8" fill="none" stroke="#777" />
            </svg>
          </ViewButton>
          <ViewButton $ml={9}>
            <svg width="14" height="14" viewBox="0 0 14 14">
              <path d="M.5 13.5V.5h13v13M5 .5v5h4v-5M.5 13.5h13" fill="none" stroke="#777" />
            </svg>
          </ViewButton>
          <StatusItem $ml={14}>−</StatusItem>
          <ZoomTrack>
            <ZoomThumb />
          </ZoomTrack>
          <StatusItem>+</StatusItem>
          <ZoomPercent>115%</ZoomPercent>
        </StatusBar>

        <RedBox />
        <Leader width="1239" height="673">
          <line x1="255" y1="226" x2="159" y2="361" stroke={RED} strokeWidth="2" />
          <circle cx="159" cy="361" r="4" fill={RED} />
        </Leader>
        <Callout>縦書きになる</Callout>
      </Window>
    </>
  );
}
